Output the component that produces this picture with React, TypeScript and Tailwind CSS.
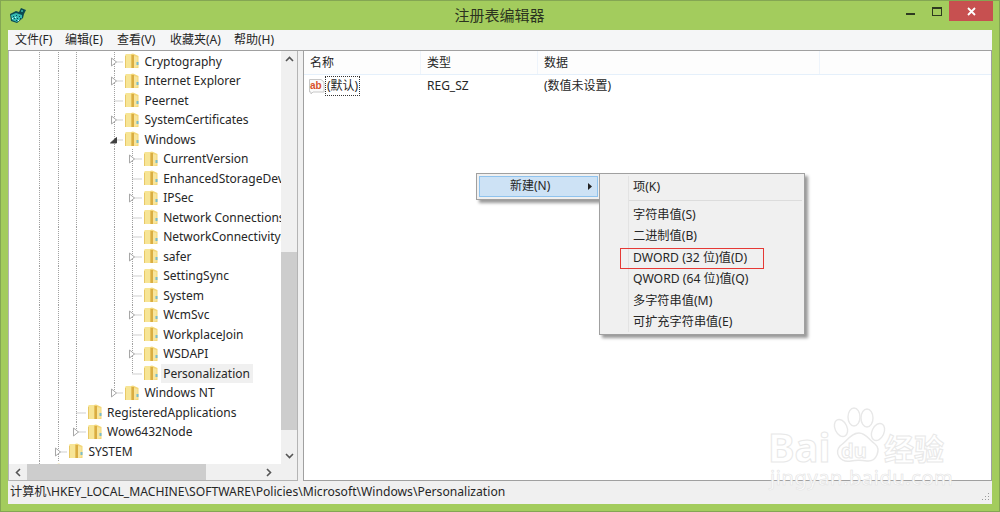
import React from 'react';

type Expander = 'closed' | 'open' | 'none';

interface TreeRow {
    label: string;
    col: number;
    expander: Expander;
    guides: number[];
    last?: boolean;
    selected?: boolean;
}

const w = [0, 1, 2, 4];
const treeRows: TreeRow[] = [
    { label: 'Cryptography', col: 4, expander: 'closed', guides: [0, 1, 2] },
    { label: 'Internet Explorer', col: 4, expander: 'closed', guides: [0, 1, 2] },
    { label: 'Peernet', col: 4, expander: 'none', guides: [0, 1, 2] },
    { label: 'SystemCertificates', col: 4, expander: 'closed', guides: [0, 1, 2] },
    { label: 'Windows', col: 4, expander: 'open', guides: [0, 1, 2] },
    { label: 'CurrentVersion', col: 5, expander: 'closed', guides: w },
    { label: 'EnhancedStorageDevices', col: 5, expander: 'none', guides: w },
    { label: 'IPSec', col: 5, expander: 'closed', guides: w },
    { label: 'Network Connections', col: 5, expander: 'none', guides: w },
    { label: 'NetworkConnectivityStatus', col: 5, expander: 'none', guides: w },
    { label: 'safer', col: 5, expander: 'closed', guides: w },
    { label: 'SettingSync', col: 5, expander: 'none', guides: w },
    { label: 'System', col: 5, expander: 'none', guides: w },
    { label: 'WcmSvc', col: 5, expander: 'closed', guides: w },
    { label: 'WorkplaceJoin', col: 5, expander: 'none', guides: w },
    { label: 'WSDAPI', col: 5, expander: 'closed', guides: w },
    { label: 'Personalization', col: 5, expander: 'none', guides: w, last: true, selected: true },
    { label: 'Windows NT', col: 4, expander: 'closed', guides: [0, 1, 2], last: true },
    { label: 'RegisteredApplications', col: 2, expander: 'none', guides: [0, 1] },
    { label: 'Wow6432Node', col: 2, expander: 'closed', guides: [0, 1], last: true },
    { label: 'SYSTEM', col: 1, expander: 'closed', guides: [0] },
    { label: '', col: 0, expander: 'closed', guides: [], last: true },
];

const menuItems = ['文件(F)', '编辑(E)', '查看(V)', '收藏夹(A)', '帮助(H)'];
const menuWidths = ['w-[50px]', 'w-[52px]', 'w-[53px]', 'w-[64px]', 'w-[50px]'];
const subItems = ['字符串值(S)', '二进制值(B)', 'DWORD (32 位)值(D)', 'QWORD (64 位)值(Q)', '多字符串值(M)', '可扩充字符串值(E)'];

const Folder = () => (
    <svg width="14" height="16" viewBox="0 0 14 16" className="flex-none">
        <path d="M0 2 L1 1 L6 1 L8 2 L8 15 L0 15 Z" fill="#f7e596" />
        <path d="M0 3 L1 3 L1 15 L0 15 Z" fill="#e8c867" />
        <path d="M6 1 L8 0.5 L13.5 3 L13.5 15 L6 15 Z" fill="#f3d677" />
        <path d="M6.5 2 L9 2 L9 15 L6.5 15 Z" fill="#d9ad42" />
        <path d="M9 3 L12.5 4 L12.5 14 L9 15 Z" fill="#f8e59c" />
        <rect x="11.5" y="9" width="2" height="3" fill="#79bccb" />
    </svg>
);

// one indent column of the tree: dotted guide, connector and expander glyph
const TreeCell = ({ guide, self, last, expander }: { guide?: boolean; self?: boolean; last?: boolean; expander?: Expander }) => (
    <svg width="18.7" height="19.5" viewBox="0 0 18.7 19.5" className="flex-none">
        {guide && <line x1="9.5" y1="0" x2="9.5" y2="19.5" stroke="#a0a0a0" strokeDasharray="1 1" />}
        {self && <line x1="9.5" y1="0" x2="9.5" y2={last ? 10 : 19.5} stroke="#a0a0a0" strokeDasharray="1 1" />}
        {self && <line x1="9.5" y1="10" x2="18.7" y2="10" stroke="#a0a0a0" strokeDasharray="1 1" />}
        {expander === 'closed' && (
            <path d="M6.5 6 L11.5 10 L6.5 14 Z" fill="#fff" stroke="#a6a6a6" />
        )}
        {expander === 'open' && <path d="M5.5 13 L11.5 13 L11.5 7.5 Z" fill="#404040" stroke="#404040" />}
    </svg>
);

const Row = ({ row }: { row: TreeRow }) => (
    <div className="flex items-center h-[19.5px] flex-none whitespace-nowrap">
        {Array.from({ length: row.col + 1 }).map((_, i) => (
            <TreeCell
                key={i}
                guide={row.guides.includes(i)}
                self={i === row.col}
                last={i === row.col && row.last}
                expander={i === row.col ? row.expander : undefined}
            />
        ))}
        <div className="ml-[2px] flex-none">
            <Folder />
        </div>
        <span className={`ml-[3px] pl-[2px] pr-[3px] leading-[19px] ${row.selected ? 'bg-[#f0f0f0]' : ''}`}>{row.label}</span>
    </div>
);

const Chevron = ({ dir }: { dir: 'up' | 'down' | 'left' | 'right' }) => {
    const paths = {
        up: 'M2 7 L5.5 3.5 L9 7',
        down: 'M2 4 L5.5 7.5 L9 4',
        left: 'M7 2 L3.5 5.5 L7 9',
        right: 'M4 2 L7.5 5.5 L4 9',
    };
    return (
        <svg width="11" height="11" viewBox="0 0 11 11" className="flex-none">
            <path d={paths[dir]} fill="none" stroke="#555" strokeWidth="1.6" />
        </svg>
    );
};

const RegIcon = () => (
    <svg width="16" height="15" viewBox="0 0 16 15">
        <path d="M0 6 L6 3 L9 4 L11 0 L16 2 L14 6 L13 10 L7 15 L1 13 Z" fill="#0b4a52" />
        <path d="M1 7 L6 5 L12 7 L12 10 L7 14 L2 12 Z" fill="#35b9b2" />
        <path d="M3 8 h1 v1 h-1 z M6 7 h1 v1 h-1 z M9 8 h1 v1 h-1 z M4 10 h1 v1 h-1 z M7 10 h1 v1 h-1 z M10 10 h1 v1 h-1 z M6 12 h1 v1 h-1 z" fill="#0b4a52" />
        <path d="M2 10 h1 v1 h-1 z M5 9 h1 v1 h-1 z M8 12 h1 v1 h-1 z" fill="#d8fbf8" />
        <path d="M11 2 h2 v2 h-2 z" fill="#2f9c98" />
    </svg>
);

const AbIcon = () => (
    <svg width="16" height="17" viewBox="0 0 16 17">
        <path d="M0.5 1.5 H12 L15 4 V14 H4 L2 16 L2 14 H0.5 Z" fill="#fafafa" stroke="#c8c8c8" />
        <text x="1" y="10.5" fontSize="10" fontWeight="700" fill="#d9502a" fontFamily="Liberation Sans">ab</text>
    </svg>
);

const Watermark = () => (
    <div className="absolute left-[766px] top-[405px] w-[190px] h-[90px] pointer-events-none text-white [-webkit-text-stroke:1px_#e8e8e8]">
        <span className="absolute left-[1px] top-[21px] text-[40px] leading-[40px] font-bold">Bai</span>
        <svg width="60" height="60" viewBox="0 0 60 60" className="absolute left-[60px] top-0">
            <g fill="#fff" stroke="#e8e8e8" strokeWidth="1.4">
                <ellipse cx="14" cy="22" rx="6" ry="9" transform="rotate(-25 14 22)" />
                <ellipse cx="27" cy="11" rx="6" ry="9" />
                <ellipse cx="40" cy="12" rx="6" ry="9" />
                <ellipse cx="51" cy="26" rx="6" ry="9" transform="rotate(25 51 26)" />
                <path d="M32 27 C39 27 42 34 48 38 C54 43 50 56 40 55 C34 54 29 54 24 55 C13 57 7 47 13 40 C20 35 24 27 32 27 Z" />
            </g>
        </svg>
        <span className="absolute left-[74px] top-[33px] text-[20px] leading-[24px] font-bold">du</span>
        <span className="absolute left-[117px] top-[27px] text-[30px] leading-[32px] font-bold">经验</span>
        <span className="absolute left-[3px] top-[62px] text-[20px] leading-[20px] tracking-[0.6px] [-webkit-text-stroke:0.6px_#e2e2e2]">jingyan.baidu.com</span>
    </div>
);

const App = () => {
    return (
        <div className="relative w-[1000px] h-[512px] flex flex-col overflow-hidden bg-[#a3cc5d] border border-[#84a653] text-[12px] text-[#262626] [font-family:'Noto_Sans','Noto_Sans_CJK_SC',sans-serif]">
            {/* Title bar */}
            <div className="flex items-start h-[29px] flex-none pl-[9px]">
                <div className="mt-[7px]"><RegIcon /></div>
                <div className="flex-1 text-center text-[15px] leading-[28px] text-[#2b3320] pl-[67px]">注册表编辑器</div>
                <div className="flex items-start pr-[6px]">
                    <div className="w-[9px] h-[2px] mt-[12px] bg-[#2e3a20] mr-[17px]"></div>
                    <div className="w-[10px] h-[9px] mt-[6px] border border-t-2 border-[#2e3a20] mr-[7px]"></div>
                    <div className="w-[44px] h-[20px] bg-[#c75050] flex items-center justify-center text-white">
                        <svg width="9" height="9" viewBox="0 0 9 9"><path d="M1 1 L8 8 M8 1 L1 8" stroke="#fff" strokeWidth="1.8" /></svg>
                    </div>
                </div>
            </div>

            <div className="flex-1 flex flex-col mx-[7px] mb-[7px] min-h-0 bg-[#f0f0f0]">
                {/* Menu bar */}
                <div className="flex items-center h-[21px] flex-none bg-[#f5f6f7] pl-[7px] border-b border-[#a0a0a0]">
                    {menuItems.map((m, i) => (
                        <span key={m} className={menuWidths[i]}>{m}</span>
                    ))}
                </div>

                <div className="flex-1 flex gap-[5px] min-h-0">
                    {/* Tree pane */}
                    <div className="w-[290px] flex flex-col bg-white border border-t-0 border-[#b4b4b4]">
                        <div className="flex-1 flex min-h-0">
                            <div className="flex-1 min-w-0 overflow-hidden flex flex-col pl-[21px] pt-[0.5px]">
                                {treeRows.map((r, i) => (
                                    <Row key={i} row={r} />
                                ))}
                            </div>
                            <div className="w-[16px] flex-none flex flex-col items-center bg-[#f0f0f0]">
                                <div className="h-[17px] flex items-center"><Chevron dir="up" /></div>
                                <div className="flex-1 w-full pt-[184px] pb-[17px] flex">
                                    <div className="w-full bg-[#cdcdcd]"></div>
                                </div>
                                <div className="h-[17px] flex items-center"><Chevron dir="down" /></div>
                            </div>
                        </div>
                        <div className="h-[16px] flex-none flex items-center bg-[#f0f0f0]">
                            <div className="w-[18px] flex justify-center"><Chevron dir="left" /></div>
                            <div className="w-[179px] h-full bg-[#cdcdcd]"></div>
                            <div className="flex-1"></div>
                            <div className="w-[35px] flex justify-start pl-[1px]"><Chevron dir="right" /></div>
                        </div>
                    </div>

                    {/* Values pane */}
                    <div className="flex-1 min-w-0 bg-white border border-t-0 border-[#a0a0a0] flex flex-col">
                        <div className="flex h-[24px] flex-none border-b border-[#e5f0fb] bg-[#fdfdfd]">
                            <div className="w-[117px] pl-[6px] leading-[24px] border-r border-[#eef4fb]">名称</div>
                            <div className="w-[117px] pl-[6px] leading-[24px] border-r border-[#eef4fb]">类型</div>
                            <div className="w-[282px] pl-[6px] leading-[24px] border-r border-[#eef4fb]">数据</div>
                        </div>
                        <div className="flex h-[22px] items-center">
                            <div className="w-[117px] flex items-center pl-[5px]">
                                <AbIcon />
                                <span className="px-[1px] leading-[18px] border border-dotted border-[#333]">(默认)</span>
                            </div>
                            <div className="w-[117px] pl-[6px]">REG_SZ</div>
                            <div className="pl-[6px]">(数值未设置)</div>
                        </div>
                    </div>
                </div>

                {/* Status bar */}
                <div className="relative h-[23px] flex-none flex items-center pl-[2px] bg-[#f0f0f0] whitespace-nowrap text-[12.15px]">
                    计算机\HKEY_LOCAL_MACHINE\SOFTWARE\Policies\Microsoft\Windows\Personalization
                    <svg width="10" height="10" viewBox="0 0 10 10" className="absolute right-[2px] bottom-[2px]">
                        <path d="M8 1 h1 v1 h-1 z M5 4 h1 v1 h-1 z M8 4 h1 v1 h-1 z M2 7 h1 v1 h-1 z M5 7 h1 v1 h-1 z M8 7 h1 v1 h-1 z" fill="#9a9a9a" />
                    </svg>
                </div>
            </div>

            <Watermark />

            {/* Context menu */}
            <div className="absolute left-[475px] top-[172px] w-[125px] h-[27px] p-[2px] bg-[#f0f0f0] border border-[#a0a0a0] shadow-[3px_3px_3px_rgba(0,0,0,0.4)]">
                <div className="h-[21px] flex items-center bg-[#cde2f5] border border-[#8fc3ee] pl-[30px] pr-[5px] justify-between">
                    <span className="leading-[18px] mb-[1px]">新建(N)</span>
                    <svg width="4" height="7" viewBox="0 0 4 7"><path d="M0 0 L4 3.5 L0 7 Z" fill="#222" /></svg>
                </div>
            </div>

            {/* Sub menu */}
            <div className="absolute left-[598px] top-[172px] w-[206px] h-[162px] flex flex-col bg-[#f0f0f0] border border-[#a0a0a0] shadow-[3px_3px_3px_rgba(0,0,0,0.4)] pt-[2px] text-[12.2px]">
                <div className="absolute left-[28px] top-[2px] bottom-[2px] border-l border-[#e3e3e3]"></div>
                <div className="h-[21px] leading-[21px] pl-[33px]">项(K)</div>
                <div className="h-[7px] ml-[29px] mr-[2px] flex items-center"><div className="w-full border-t border-[#dcdcdc]"></div></div>
                {subItems.map((t) => (
                    <div key={t} className="h-[21.4px] leading-[21.4px] pl-[33px] flex-none">{t}</div>
                ))}
                <div className="absolute left-[20px] top-[74px] w-[144px] h-[21px] border border-[#e53935]"></div>
            </div>
        </div>
    );
};

export default App;
